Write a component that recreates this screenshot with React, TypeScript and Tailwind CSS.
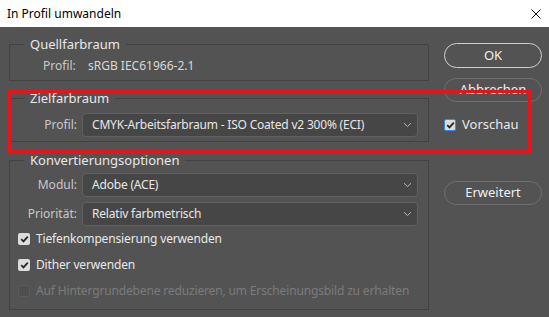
import React from "react";

const font = { fontFamily: '"Noto Sans", "Open Sans", sans-serif' };

function Chevron() {
  return (
    <svg width="9" height="6" viewBox="0 0 9 6" className="shrink-0">
      <path d="M1 1.2 L4.5 4.6 L8 1.2" fill="none" stroke="#b8b8b8" strokeWidth="1" />
    </svg>
  );
}

function Select({ value }: { value: string }) {
  return (
    <div className="flex h-[24px] w-[336px] items-center justify-between rounded-[4px] border border-[#616161] bg-[#464646] pl-[9px] pr-[5px] text-[12px] tracking-[-0.2px] text-[#e6e6e6]">
      <span className="whitespace-nowrap leading-none">{value}</span>
      <Chevron />
    </div>
  );
}

function Check({ checked, disabled, blue }: { checked?: boolean; disabled?: boolean; blue?: boolean }) {
  if (disabled) {
    return <div className="h-[12px] w-[12px] shrink-0 rounded-[2px] border border-[#5b5b5b] bg-[#4f4f4f]" />;
  }
  return (
    <div
      className={
        "flex h-[12px] w-[12px] shrink-0 items-center justify-center rounded-[2px] bg-[#dcdcdc] " +
        (blue ? "border border-[#3f86e8]" : "")
      }
    >
      {checked && (
        <svg width="9" height="8" viewBox="0 0 9 8">
          <path d="M1.2 4.2 L3.5 6.4 L7.8 1.6" fill="none" stroke="#262626" strokeWidth="1.8" />
        </svg>
      )}
    </div>
  );
}

export default function App() {
  return (
    <div className="h-[317px] w-[549px] overflow-hidden bg-[#535353]" style={font}>
      {/* title bar */}
      <div className="flex h-[27px] items-center justify-between bg-white pl-[7px] pr-[8px]">
        <span className="text-[12px] text-black">In Profil umwandeln</span>
        <svg width="10" height="10" viewBox="0 0 10 10">
          <path d="M0.5 0.5 L9.5 9.5 M9.5 0.5 L0.5 9.5" stroke="#111" strokeWidth="1" />
        </svg>
      </div>

      <div className="relative flex pl-[9px] pt-[8px]">
        {/* left column */}
        <div className="flex w-[420px] flex-col">
          <fieldset className="m-0 border border-[#424242] px-0 pb-[5px] pt-[4px]">
            <legend className="ml-[14px] px-[6px] text-[13px] leading-[18px] text-[#e8e8e8]">Quellfarbraum</legend>
            <div className="flex items-center text-[12px] leading-[18px]">
              <span className="ml-[33px] w-[45px] text-[#c8c8c8]">Profil:</span>
              <span className="text-[#d8d8d8]">sRGB IEC61966-2.1</span>
            </div>
          </fieldset>

          <fieldset className="m-0 mt-[8px] border border-[#424242] px-0 pb-[4px] pt-[6px]">
            <legend className="ml-[14px] px-[6px] text-[13px] leading-[18px] text-[#e8e8e8]">Zielfarbraum</legend>
            <div className="flex items-center">
              <span className="w-[72px] pr-[5px] text-right text-[12px] text-[#c8c8c8]">Profil:</span>
              <Select value="CMYK-Arbeitsfarbraum - ISO Coated v2 300% (ECI)" />
            </div>
          </fieldset>

          <fieldset className="m-0 mt-[9px] border border-[#424242] px-0 pb-[5px] pt-[4px]">
            <legend className="ml-[14px] px-[6px] text-[13px] leading-[18px] text-[#e8e8e8]">Konvertierungsoptionen</legend>
            <div className="flex flex-col gap-[5px]">
              <div className="flex items-center">
                <span className="w-[72px] pr-[5px] text-right text-[12px] text-[#c8c8c8]">Modul:</span>
                <Select value="Adobe (ACE)" />
              </div>
              <div className="flex items-center">
                <span className="w-[72px] pr-[5px] text-right text-[12px] text-[#c8c8c8]">Priorität:</span>
                <Select value="Relativ farbmetrisch" />
              </div>
            </div>
            <div className="flex h-[26px] items-center gap-[6px] pl-[8px] text-[12px] tracking-[-0.15px] text-[#e8e8e8]">
              <Check checked />
              <span className="whitespace-nowrap">Tiefenkompensierung verwenden</span>
            </div>
            <div className="flex h-[26px] items-center gap-[6px] pl-[8px] text-[12px] tracking-[-0.15px] text-[#e8e8e8]">
              <Check checked />
              <span className="whitespace-nowrap">Dither verwenden</span>
            </div>
            <div className="flex h-[26px] items-center gap-[6px] pl-[8px] text-[12px] tracking-[-0.15px] text-[#7b7b7b]">
              <Check disabled />
              <span className="whitespace-nowrap">Auf Hintergrundebene reduzieren, um Erscheinungsbild zu erhalten</span>
            </div>
          </fieldset>
        </div>

        {/* right column */}
        <div className="ml-[15px] flex w-[98px] flex-col pt-[8px]">
          <button className="flex h-[25px] items-center justify-center rounded-full border-[1.5px] border-[#cfcfcf] text-[13px] text-[#f0f0f0]">
            OK
          </button>
          <button className="mt-[10px] flex h-[24px] items-center justify-center rounded-full border border-[#6f6f6f] text-[13px] text-[#f0f0f0]">
            Abbrechen
          </button>
          <div className="mt-[13px] flex items-center gap-[6px] text-[13px] text-[#e8e8e8]">
            <Check checked blue />
            <span>Vorschau</span>
          </div>
          <button className="mt-[46px] flex h-[24px] items-center justify-center rounded-full border border-[#6f6f6f] text-[13px] text-[#f0f0f0]">
            Erweitert
          </button>
        </div>

        {/* red highlight rectangle (annotation overlay) */}
        <div className="pointer-events-none absolute left-[8px] top-[63px] h-[63px] w-[523px] border-[3px] border-[#e8141c]" />
      </div>
    </div>
  );
}
